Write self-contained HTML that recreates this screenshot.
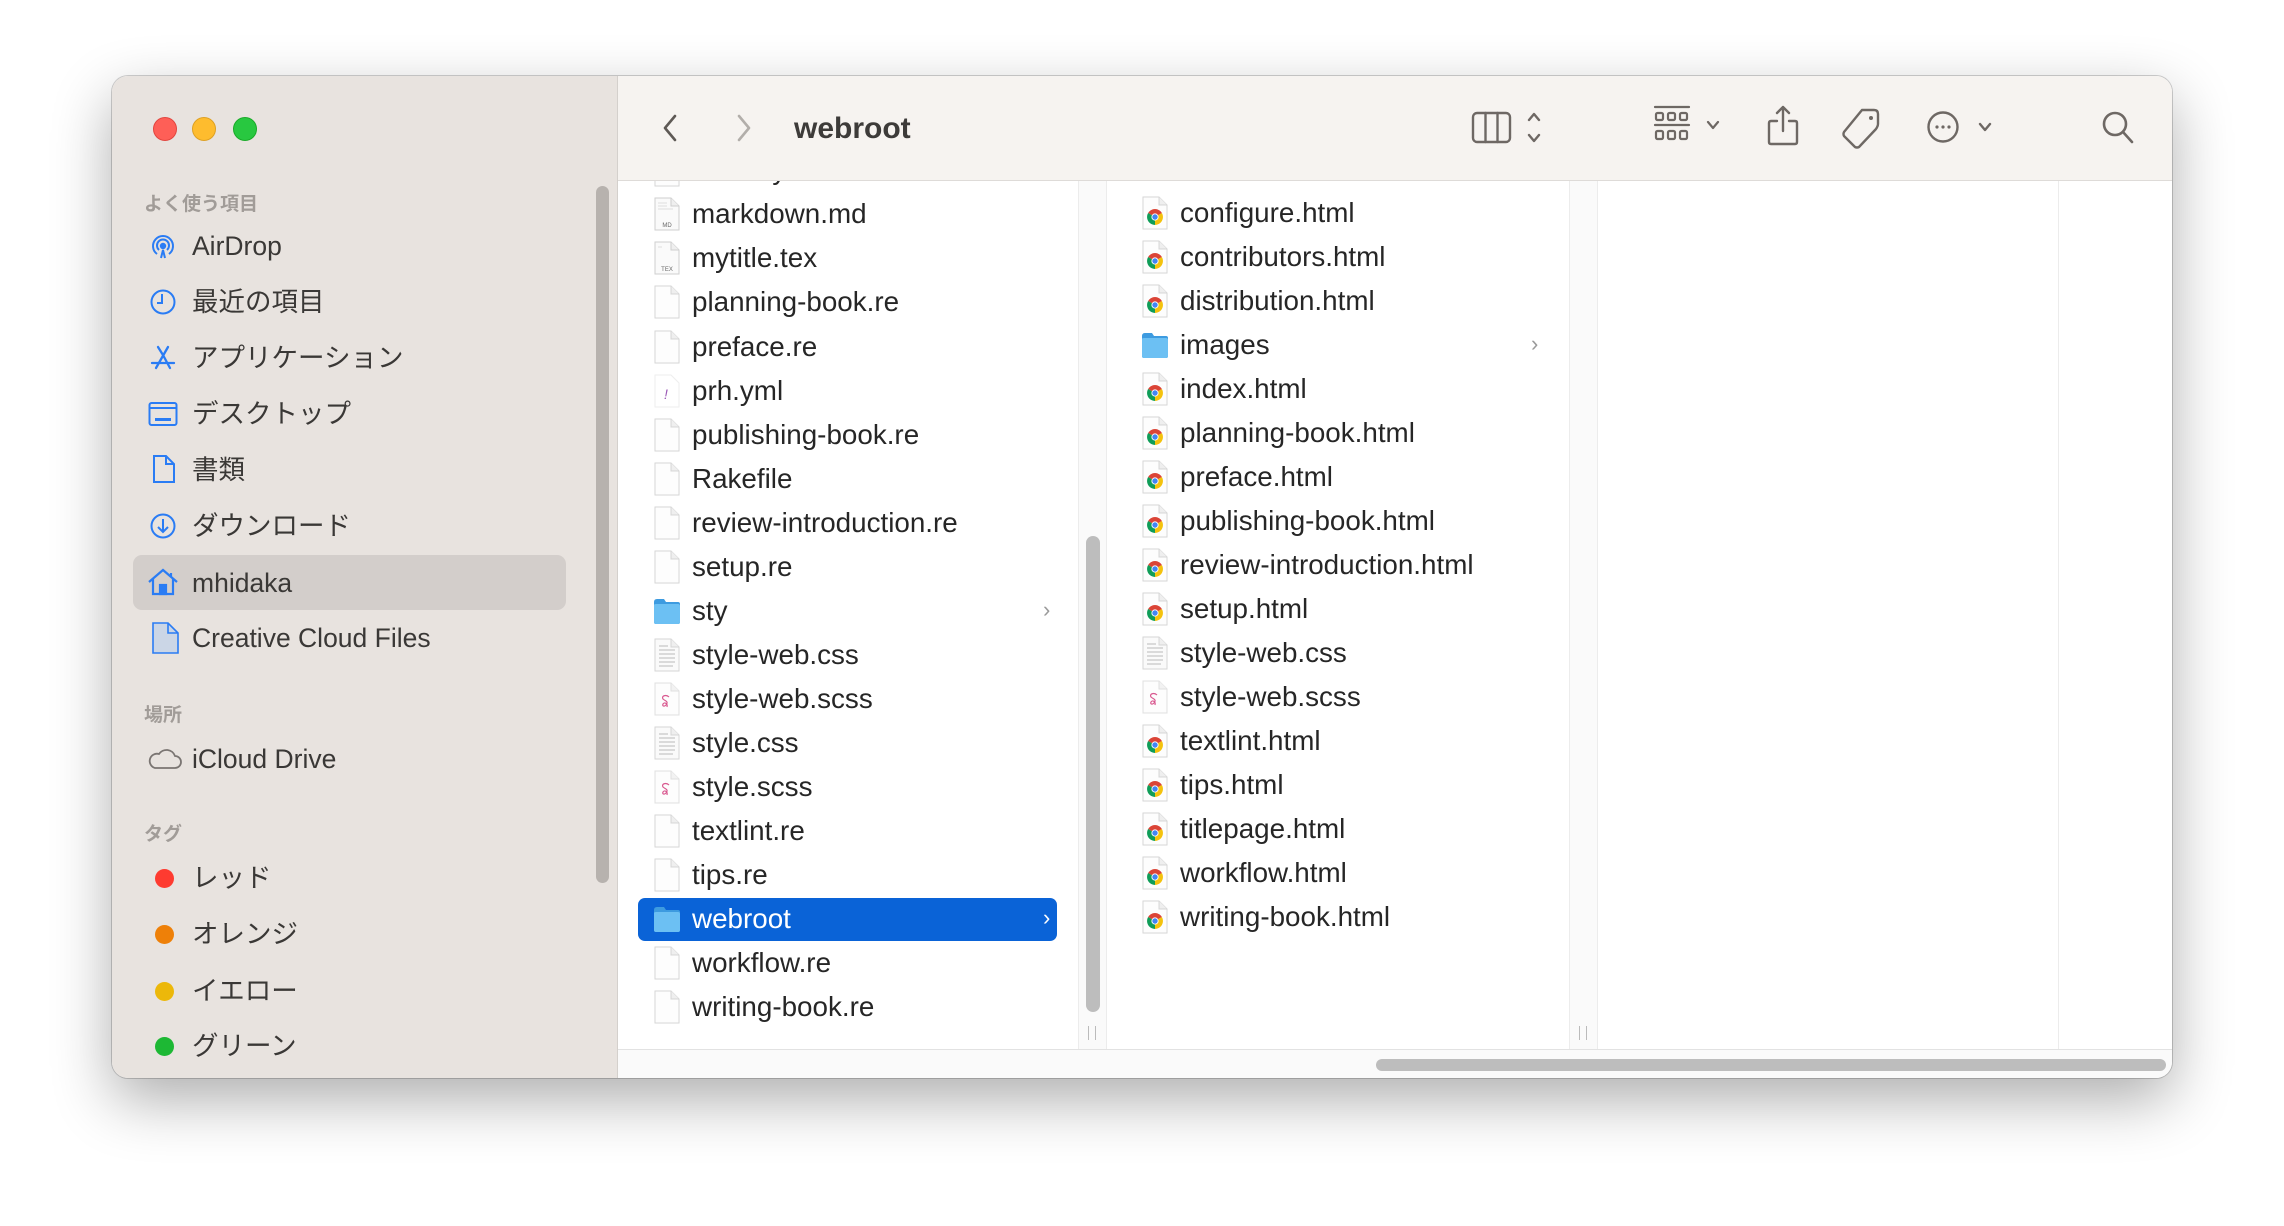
<!DOCTYPE html>
<html><head><meta charset="utf-8"><style>
*{margin:0;padding:0;box-sizing:border-box}
body{width:2284px;height:1226px;background:#fff;position:relative;overflow:hidden;font-family:"Liberation Sans","Noto Sans CJK JP",sans-serif}
.win{position:absolute;left:112px;top:76px;width:2060px;height:1002px;border-radius:16px;overflow:hidden;background:#fff;box-shadow:0 22px 60px rgba(0,0,0,.32),0 0 0 1px rgba(0,0,0,.18)}
.side{position:absolute;left:0;top:0;width:506px;height:1002px;background:#e8e3df;border-right:1px solid #d4d0cc}
.tl{position:absolute;top:41px;width:24px;height:24px;border-radius:50%}
.sh{position:absolute;left:32px;font-size:19px;color:#a19c98;font-weight:bold}
.si{position:absolute;left:0;width:506px;height:56px;line-height:56px;font-size:26.5px;color:#3a3836}
.si .t{position:absolute;left:80px}
.si svg,.si .dot{position:absolute}
.dot{left:43px;top:19px;width:19px;height:19px;border-radius:50%}
.sel{position:absolute;left:21px;top:479px;width:433px;height:55px;background:#d3cecb;border-radius:9px}
.sscroll{position:absolute;left:484px;top:110px;width:13px;height:697px;background:#b7b2ae;border-radius:7px}
.tb{position:absolute;left:506px;top:0;width:1554px;height:105px;background:#f6f3f0;border-bottom:1px solid #dedbd8}
.title{position:absolute;left:176px;top:36px;font-size:30px;font-weight:bold;color:#3d3b39}
.col{position:absolute;top:105px;height:868px;overflow:hidden;background:#fff}
.sep{position:absolute;top:105px;height:868px;width:29px;background:#fafafa;border-left:1px solid #ececec;border-right:1px solid #ececec}
.r{position:absolute;height:44px;line-height:44px;font-size:27.8px;color:#262626;white-space:nowrap}
.r svg{position:absolute;top:5px;left:0}
.r .t{position:absolute;left:39px}
.chev{position:absolute;font-size:22px;color:#9a9a9a}
.hs{position:absolute;left:506px;top:973px;width:1554px;height:29px;background:#fafafa;border-top:1px solid #e2e2e2}
</style></head><body>
<svg width="0" height="0" style="position:absolute">
<defs>
<symbol id="doc" viewBox="0 0 28 34"><path d="M2 1H18L26 9V33H2Z" fill="#fdfdfd" stroke="#d6d6d6"/><path d="M18 1V9H26" fill="#efefef" stroke="#d6d6d6"/></symbol>
<symbol id="chr" viewBox="0 0 28 34"><path d="M2 1H18L26 9V33H2Z" fill="#fdfdfd" stroke="#d6d6d6"/><path d="M18 1V9H26" fill="#efefef" stroke="#d6d6d6"/>
<path d="M14 21L7.1 17A8 8 0 0 1 20.9 17Z" fill="#db4437"/><path d="M14 21L20.9 17A8 8 0 0 1 14 29Z" fill="#f4c20d"/><path d="M14 21L14 29A8 8 0 0 1 7.1 17Z" fill="#0f9d58"/><circle cx="14" cy="21" r="3.6" fill="#fff"/><circle cx="14" cy="21" r="2.7" fill="#4285f4"/></symbol>
<symbol id="css" viewBox="0 0 28 34"><path d="M2 1H18L26 9V33H2Z" fill="#fafafa" stroke="#d6d6d6"/><path d="M18 1V9H26" fill="#efefef" stroke="#d6d6d6"/><g stroke="#c8c8c8" stroke-width="1.3"><path d="M6 8H15M6 12H22M6 16H22M6 20H22M6 24H22M6 28H20"/></g></symbol>
<symbol id="scss" viewBox="0 0 28 34"><path d="M2 1H18L26 9V33H2Z" fill="#fdfdfd" stroke="#e0e0e0"/><path d="M18 1V9H26" fill="#f2f2f2" stroke="#e0e0e0"/><path d="M16 15C13 12 8 14 10 17C12 19 16 19 13 23C11 25 9 24 10 22C11 20 15 21 14 25" fill="none" stroke="#d9588f" stroke-width="1.2"/></symbol>
<symbol id="md" viewBox="0 0 28 34"><path d="M2 1H18L26 9V33H2Z" fill="#fafafa" stroke="#cfcfcf"/><path d="M18 1V9H26" fill="#efefef" stroke="#cfcfcf"/><path d="M5 6H14M5 9H14M5 12H20" stroke="#ddd"/><text x="14" y="30" font-size="6" text-anchor="middle" fill="#666" font-family="Liberation Sans">MD</text></symbol>
<symbol id="tex" viewBox="0 0 28 34"><path d="M2 1H18L26 9V33H2Z" fill="#fafafa" stroke="#cfcfcf"/><path d="M18 1V9H26" fill="#efefef" stroke="#cfcfcf"/><path d="M5 6H9" stroke="#ddd"/><text x="14" y="30" font-size="6" text-anchor="middle" fill="#666" font-family="Liberation Sans">TEX</text></symbol>
<symbol id="yml" viewBox="0 0 28 34"><path d="M2 1H18L26 9V33H2Z" fill="#fff" stroke="#eee"/><text x="13" y="25" font-size="14" font-style="italic" text-anchor="middle" fill="#9b59b6" font-family="Liberation Sans">!</text></symbol>
<symbol id="fold" viewBox="0 0 28 34"><path d="M1 8Q1 5 4 5H11L13 8H25Q27 8 27 10V28Q27 30 25 30H3Q1 30 1 28Z" fill="#3d9be0"/><path d="M1 11Q1 10 3 10H25Q27 10 27 12V28Q27 30 25 30H3Q1 30 1 28Z" fill="#6cc0f3"/></symbol>
</defs></svg>

<div class="win">
<div class="side">
 <div class="tl" style="left:41px;background:#fe5f57;border:1px solid #e2463f"></div>
 <div class="tl" style="left:80px;background:#febc2e;border:1px solid #dea123"></div>
 <div class="tl" style="left:121px;background:#28c840;border:1px solid #1aab29"></div>
 <div class="sh" style="top:113px">よく使う項目</div>
 <div class="sel"></div>
 <div class="si" style="top:142px"><svg style="left:37px;top:14px" width="28" height="28" viewBox="0 0 28 28" fill="none" stroke="#2a7cf4" stroke-width="2"><path d="M8 22A10 10 0 1 1 20 22"/><path d="M10 18A6 6 0 1 1 18 18"/><circle cx="14" cy="14" r="2.2" fill="#2a7cf4"/><path d="M12 26L14 18L16 26"/></svg><span class="t">AirDrop</span></div>
 <div class="si" style="top:198px"><svg style="left:37px;top:14px" width="28" height="28" viewBox="0 0 28 28" fill="none" stroke="#2a7cf4" stroke-width="2"><circle cx="14" cy="14" r="11.5"/><path d="M13 6V15H8"/></svg><span class="t">最近の項目</span></div>
 <div class="si" style="top:254px"><svg style="left:37px;top:14px" width="28" height="28" viewBox="0 0 28 28" fill="none" stroke="#2a7cf4" stroke-width="2.3" stroke-linecap="round"><path d="M9 3L14 11M19 3L7 24M14 11L21 24M3 19H25"/></svg><span class="t">アプリケーション</span></div>
 <div class="si" style="top:310px"><svg style="left:36px;top:15px" width="30" height="26" viewBox="0 0 30 26" fill="none" stroke="#2a7cf4" stroke-width="2"><rect x="1.5" y="2" width="27" height="22" rx="2"/><path d="M1.5 7H28.5"/><rect x="7" y="17" width="16" height="3" fill="#2a7cf4" stroke="none"/></svg><span class="t">デスクトップ</span></div>
 <div class="si" style="top:366px"><svg style="left:40px;top:12px" width="24" height="30" viewBox="0 0 24 30" fill="none" stroke="#2a7cf4" stroke-width="2"><path d="M2 2H14L22 10V28H2Z"/><path d="M14 2V10H22"/></svg><span class="t">書類</span></div>
 <div class="si" style="top:422px"><svg style="left:37px;top:14px" width="28" height="28" viewBox="0 0 28 28" fill="none" stroke="#2a7cf4" stroke-width="2"><circle cx="14" cy="14" r="11.5"/><path d="M14 7V20M9 15L14 20L19 15"/></svg><span class="t">ダウンロード</span></div>
 <div class="si" style="top:479px"><svg style="left:35px;top:13px" width="32" height="28" viewBox="0 0 32 28" fill="none" stroke="#2a7cf4" stroke-width="2.2"><path d="M2 14L16 2L30 14M6 11V26H26V11M24 5V9"/><rect x="13" y="17" width="6" height="9" fill="#2a7cf4"/></svg><span class="t">mhidaka</span></div>
 <div class="si" style="top:534px"><svg style="left:39px;top:12px" width="28" height="32" viewBox="0 0 28 32"><path d="M2 1H17L27 11V31H2Z" fill="#cbd6e6" stroke="#2a7cf4" stroke-width="1.6"/><path d="M17 1V11H27" fill="none" stroke="#2a7cf4" stroke-width="1.6"/></svg><span class="t">Creative Cloud Files</span></div>
 <div class="sh" style="top:624px">場所</div>
 <div class="si" style="top:655px"><svg style="left:36px;top:16px" width="34" height="22" viewBox="0 0 34 22" fill="none" stroke="#7a7572" stroke-width="1.8"><path d="M7 21H27A6 6 0 0 0 27 9A9 9 0 0 0 11 7A7 7 0 0 0 7 21Z"/></svg><span class="t">iCloud Drive</span></div>
 <div class="sh" style="top:743px">タグ</div>
 <div class="si" style="top:774px"><div class="dot" style="background:#fe3b30"></div><span class="t">レッド</span></div>
 <div class="si" style="top:830px"><div class="dot" style="background:#ee8008"></div><span class="t">オレンジ</span></div>
 <div class="si" style="top:887px"><div class="dot" style="background:#ecb80a"></div><span class="t">イエロー</span></div>
 <div class="si" style="top:942px"><div class="dot" style="background:#1db834"></div><span class="t">グリーン</span></div>
 <div class="sscroll"></div>
</div>

<div class="tb">
 <svg style="position:absolute;left:44px;top:37px" width="16" height="30" viewBox="0 0 16 30" fill="none" stroke="#5e5955" stroke-width="2.6" stroke-linecap="round" stroke-linejoin="round"><path d="M13 3L3 15L13 27"/></svg>
 <svg style="position:absolute;left:118px;top:37px" width="16" height="30" viewBox="0 0 16 30" fill="none" stroke="#b2aeaa" stroke-width="2.6" stroke-linecap="round" stroke-linejoin="round"><path d="M3 3L13 15L3 27"/></svg>
 <div class="title">webroot</div>
 <svg style="position:absolute;left:853px;top:35px" width="100" height="34" viewBox="0 0 100 34" fill="none" stroke="#6e6864" stroke-width="2.4" stroke-linecap="round" stroke-linejoin="round"><rect x="2" y="2" width="37" height="29" rx="4"/><path d="M14.5 2V31M26.5 2V31"/><path d="M58 9L63 3L68 9M58 24L63 30L68 24"/></svg>
 <svg style="position:absolute;left:1035px;top:28px" width="90" height="42" viewBox="0 0 90 42" fill="none" stroke="#6e6864" stroke-width="2.2" stroke-linecap="round" stroke-linejoin="round"><path d="M2 3H36M2 21H36"/><rect x="3" y="9" width="7" height="7" rx="1.5"/><rect x="15" y="9" width="7" height="7" rx="1.5"/><rect x="27" y="9" width="7" height="7" rx="1.5"/><rect x="3" y="27" width="7" height="8" rx="1.5"/><rect x="15" y="27" width="7" height="8" rx="1.5"/><rect x="27" y="27" width="7" height="8" rx="1.5"/><path d="M55 18L60 24L65 18"/></svg>
 <svg style="position:absolute;left:1148px;top:28px" width="34" height="44" viewBox="0 0 34 44" fill="none" stroke="#6e6864" stroke-width="2.4" stroke-linecap="round" stroke-linejoin="round"><path d="M11 17H5Q3 17 3 19V38Q3 40 5 40H29Q31 40 31 38V19Q31 17 29 17H23"/><path d="M17 27V3M11 9L17 3L23 9"/></svg>
 <svg style="position:absolute;left:1223px;top:31px" width="42" height="42" viewBox="0 0 42 42" fill="none" stroke="#6e6864" stroke-width="2.4" stroke-linejoin="round"><path d="M21 3H33Q37 3 37 7V17Q37 19 35 22L18 40Q16 41 14 40L3 29Q2 27 3 25L21 3Z"/><circle cx="30" cy="11" r="2" fill="#6e6864" stroke="none"/></svg>
 <svg style="position:absolute;left:1308px;top:34px" width="70" height="36" viewBox="0 0 70 36" fill="none" stroke="#6e6864" stroke-width="2.4" stroke-linecap="round" stroke-linejoin="round"><circle cx="17" cy="17" r="14.5"/><circle cx="11" cy="17" r="1.6" fill="#6e6864" stroke="none"/><circle cx="17" cy="17" r="1.6" fill="#6e6864" stroke="none"/><circle cx="23" cy="17" r="1.6" fill="#6e6864" stroke="none"/><path d="M54 14L59 20L64 14"/></svg>
 <svg style="position:absolute;left:1483px;top:34px" width="36" height="36" viewBox="0 0 36 36" fill="none" stroke="#6e6864" stroke-width="2.6" stroke-linecap="round"><circle cx="14" cy="14" r="11"/><path d="M22 22L31 32"/></svg>
</div>

<!-- column 1 -->
<div class="col" style="left:507px;width:459px">
 <div style="position:absolute;left:19px;top:717px;width:419px;height:43px;background:#0a63d7;border-radius:7px"></div>
 <div class="r" style="left:34px;top:-33px"><svg width="28" height="34"><use href="#doc"/></svg><span class="t">locale.yml</span></div>
 <div class="r" style="left:34px;top:11px"><svg width="28" height="34"><use href="#md"/></svg><span class="t">markdown.md</span></div>
 <div class="r" style="left:34px;top:55px"><svg width="28" height="34"><use href="#tex"/></svg><span class="t">mytitle.tex</span></div>
 <div class="r" style="left:34px;top:99px"><svg width="28" height="34"><use href="#doc"/></svg><span class="t">planning-book.re</span></div>
 <div class="r" style="left:34px;top:144px"><svg width="28" height="34"><use href="#doc"/></svg><span class="t">preface.re</span></div>
 <div class="r" style="left:34px;top:188px"><svg width="28" height="34"><use href="#yml"/></svg><span class="t">prh.yml</span></div>
 <div class="r" style="left:34px;top:232px"><svg width="28" height="34"><use href="#doc"/></svg><span class="t">publishing-book.re</span></div>
 <div class="r" style="left:34px;top:276px"><svg width="28" height="34"><use href="#doc"/></svg><span class="t">Rakefile</span></div>
 <div class="r" style="left:34px;top:320px"><svg width="28" height="34"><use href="#doc"/></svg><span class="t">review-introduction.re</span></div>
 <div class="r" style="left:34px;top:364px"><svg width="28" height="34"><use href="#doc"/></svg><span class="t">setup.re</span></div>
 <div class="r" style="left:34px;top:408px"><svg width="28" height="34"><use href="#fold"/></svg><span class="t">sty</span></div>
 <div class="chev" style="left:424px;top:416px">&#x203A;</div>
 <div class="r" style="left:34px;top:452px"><svg width="28" height="34"><use href="#css"/></svg><span class="t">style-web.css</span></div>
 <div class="r" style="left:34px;top:496px"><svg width="28" height="34"><use href="#scss"/></svg><span class="t">style-web.scss</span></div>
 <div class="r" style="left:34px;top:540px"><svg width="28" height="34"><use href="#css"/></svg><span class="t">style.css</span></div>
 <div class="r" style="left:34px;top:584px"><svg width="28" height="34"><use href="#scss"/></svg><span class="t">style.scss</span></div>
 <div class="r" style="left:34px;top:628px"><svg width="28" height="34"><use href="#doc"/></svg><span class="t">textlint.re</span></div>
 <div class="r" style="left:34px;top:672px"><svg width="28" height="34"><use href="#doc"/></svg><span class="t">tips.re</span></div>
 <div class="r" style="left:34px;top:716px;color:#fff"><svg width="28" height="34"><use href="#fold"/></svg><span class="t">webroot</span></div>
 <div class="chev" style="left:424px;top:724px;color:#fff">&#x203A;</div>
 <div class="r" style="left:34px;top:760px"><svg width="28" height="34"><use href="#doc"/></svg><span class="t">workflow.re</span></div>
 <div class="r" style="left:34px;top:804px"><svg width="28" height="34"><use href="#doc"/></svg><span class="t">writing-book.re</span></div>
</div>
<div class="sep" style="left:966px"><div style="position:absolute;left:7px;top:355px;width:14px;height:476px;background:#bdbdbd;border-radius:7px"></div><div style="position:absolute;left:9px;top:845px;width:8px;height:14px;border-left:1.5px solid #bbb;border-right:1.5px solid #bbb"></div></div>

<!-- column 2 -->
<div class="col" style="left:995px;width:462px">
 <div class="r" style="left:34px;top:10px"><svg width="28" height="34"><use href="#chr"/></svg><span class="t">configure.html</span></div>
 <div class="r" style="left:34px;top:54px"><svg width="28" height="34"><use href="#chr"/></svg><span class="t">contributors.html</span></div>
 <div class="r" style="left:34px;top:98px"><svg width="28" height="34"><use href="#chr"/></svg><span class="t">distribution.html</span></div>
 <div class="r" style="left:34px;top:142px"><svg width="28" height="34"><use href="#fold"/></svg><span class="t">images</span></div>
 <div class="chev" style="left:424px;top:150px">&#x203A;</div>
 <div class="r" style="left:34px;top:186px"><svg width="28" height="34"><use href="#chr"/></svg><span class="t">index.html</span></div>
 <div class="r" style="left:34px;top:230px"><svg width="28" height="34"><use href="#chr"/></svg><span class="t">planning-book.html</span></div>
 <div class="r" style="left:34px;top:274px"><svg width="28" height="34"><use href="#chr"/></svg><span class="t">preface.html</span></div>
 <div class="r" style="left:34px;top:318px"><svg width="28" height="34"><use href="#chr"/></svg><span class="t">publishing-book.html</span></div>
 <div class="r" style="left:34px;top:362px"><svg width="28" height="34"><use href="#chr"/></svg><span class="t">review-introduction.html</span></div>
 <div class="r" style="left:34px;top:406px"><svg width="28" height="34"><use href="#chr"/></svg><span class="t">setup.html</span></div>
 <div class="r" style="left:34px;top:450px"><svg width="28" height="34"><use href="#css"/></svg><span class="t">style-web.css</span></div>
 <div class="r" style="left:34px;top:494px"><svg width="28" height="34"><use href="#scss"/></svg><span class="t">style-web.scss</span></div>
 <div class="r" style="left:34px;top:538px"><svg width="28" height="34"><use href="#chr"/></svg><span class="t">textlint.html</span></div>
 <div class="r" style="left:34px;top:582px"><svg width="28" height="34"><use href="#chr"/></svg><span class="t">tips.html</span></div>
 <div class="r" style="left:34px;top:626px"><svg width="28" height="34"><use href="#chr"/></svg><span class="t">titlepage.html</span></div>
 <div class="r" style="left:34px;top:670px"><svg width="28" height="34"><use href="#chr"/></svg><span class="t">workflow.html</span></div>
 <div class="r" style="left:34px;top:714px"><svg width="28" height="34"><use href="#chr"/></svg><span class="t">writing-book.html</span></div>
</div>
<div class="sep" style="left:1457px"><div style="position:absolute;left:9px;top:845px;width:8px;height:14px;border-left:1.5px solid #bbb;border-right:1px solid #bbb"></div></div>
<div class="col" style="left:1486px;width:460px"></div>
<div class="sep" style="left:1946px;width:114px;background:#fff;border-right:none"></div>
<div class="hs"><div style="position:absolute;left:758px;top:9px;width:790px;height:12px;background:#bdbdbd;border-radius:6px"></div></div>
</div>
</body></html>
